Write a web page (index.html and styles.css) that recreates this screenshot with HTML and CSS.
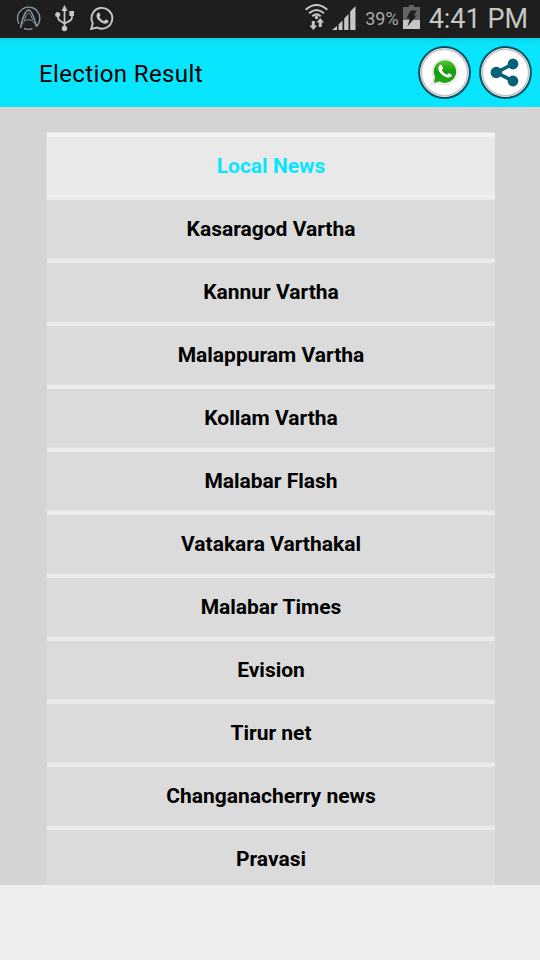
FILE: index.html
```html
<!DOCTYPE html>
<html lang="en">
<head>
    <meta charset="UTF-8">
    <meta name="viewport" content="width=device-width, initial-scale=1.0">
    <title>Election Result</title>
    <link rel="stylesheet" href="styles.css">
</head>
<body>
    <div class="status-bar">
        <div class="status-left">
            <svg class="icon-app" width="26" height="26" viewBox="0 0 26 26" fill="none" stroke="#8d9aa8">
                <path d="M3 19A11.200 11.200 0 1 1 20.500 21.300M8 23.300A11.200 11.200 0 0 0 16.500 23.700" stroke-width="1.300"/>
                <path d="M4.500 23C6 14 9.500 5 12.500 5C15.500 5 18 12 20.500 21.500" stroke-width="1.400"/>
                <path d="M4.500 23C7 13 16 11.500 20.500 21.500M8.300 15.500C10 10 11.500 8 12.500 8C13.500 8 15 10 16.700 15" stroke-width="1"/>
            </svg>
            <svg class="icon-usb" width="22" height="28" viewBox="0 0 22 28">
                <path d="M10.500 5V24M4 9V12.500C4 15 6 16 10 18.200M18 8V12.500C18 15 16 16 11 18.200" fill="none" stroke="#c6c6c6" stroke-width="1.700"/>
                <path d="M10.500 0L13.600 6H7.400ZM15.300 6H20V11H15.300Z" fill="#c6c6c6"/>
                <circle cx="3.700" cy="9.500" r="2.500" fill="#c6c6c6"/>
                <circle cx="10.500" cy="23.500" r="2.700" fill="#c6c6c6"/>
            </svg>
            <svg class="icon-chat" width="24" height="25" viewBox="0 0 24 25">
                <path d="M1.200 23L2.800 17.300A10.400 10.400 0 1 1 7.300 21.600Z" fill="none" stroke="#c6c6c6" stroke-width="1.900"/>
                <path d="M7.500 7C9 5.800 9.500 6.300 10.500 9.200C10.500 10 9.300 10.500 9.500 11.100C10.500 13.200 12 14.500 14 15.200C14.800 15.200 15.300 13.500 16 13.600C18.800 14.900 19 15 18 16.600C16.500 18.200 14.300 18 11.500 16.500C8 14.300 4.800 10.500 7.500 7Z" fill="#c6c6c6"/>
            </svg>
        </div>
        <div class="status-right">
            <svg class="icon-wifi" width="24" height="27" viewBox="0 0 24 27">
                <g fill="none" stroke="#c6c6c6" stroke-width="2">
                    <path d="M.7 5.700Q11.500 -3.700 22.300 5.700"/>
                    <path d="M4 9.200Q11.500 2.700 19 9.200"/>
                    <path d="M7.300 12.300Q11.500 8.500 15.700 12.300"/>
                </g>
                <circle cx="11.500" cy="13.500" r="1.700" fill="#c6c6c6"/>
                <path d="M6.800 17H9.800V21.500H12.200L8.300 26L4.500 21.500H6.800ZM13.800 23V18.500H11.400L15.200 14L19 18.500H16.800V23Z" fill="#c6c6c6"/>
            </svg>
            <svg class="icon-signal" width="24" height="24" viewBox="0 0 24 24">
                <path d="M0 24L5 20V24ZM6.500 18.500L10.500 14.500V24H6.500ZM12.200 12.500L16.500 8V24H12.200ZM18.200 5.500L23.500 0V24H18.200Z" fill="#c6c6c6"/>
            </svg>
            <span class="battery-level">39%</span>
            <svg class="icon-battery" width="17" height="24" viewBox="0 0 17 24">
                <path d="M0 2H6V0H11V2H17V15H0Z" fill="#646464"/>
                <path d="M0 15H17V24H0Z" fill="#c6c6c6"/>
                <path d="M7.500 5.500H14L10.800 10.500H13.500L4.500 21.500L7 13.500H3.500Z" fill="#1e1e1e"/>
            </svg>
            <span class="clock">4:41 PM</span>
        </div>
    </div>

    <div class="header">
        <h1 class="title">Election Result</h1>
        <div class="actions">
            <button class="round-button" aria-label="WhatsApp">
                <svg width="53" height="53" viewBox="0 0 53 53">
                    <defs>
                        <linearGradient id="green" x1="0" y1="0" x2="0" y2="1">
                            <stop offset="0" stop-color="#50c832"/>
                            <stop offset=".5" stop-color="#169b0c"/>
                            <stop offset="1" stop-color="#22a915"/>
                        </linearGradient>
                    </defs>
                    <circle cx="26.500" cy="26.500" r="25.400" fill="#fff" stroke="#075263" stroke-width="2"/>
                    <circle cx="26.500" cy="26.500" r="23.200" fill="none" stroke="#c4c4c4" stroke-width="1.600"/>
                    <path d="M13 39.500L15.600 32A12.800 12.800 0 1 1 20.500 37Z" fill="#fff" stroke="#dedede" stroke-width="1"/>
                    <path d="M15.800 37L17 31A11.300 11.300 0 1 1 21.500 35.500Z" fill="url(#green)"/>
                    <path d="M21.700 19C23.200 18 24.200 19 25 22C25 23 23.800 23.500 24 24.200C25.200 26.500 26.800 28 28.800 28.700C29.800 28.700 30.200 27 31 27.200C34 28.500 34.300 28.700 33.200 30.500C31.500 32 29.500 32 26.300 30.300C22 27.800 18.200 22.800 21.700 19Z" fill="#fff"/>
                </svg>
            </button>
            <button class="round-button" aria-label="Share">
                <svg width="53" height="53" viewBox="0 0 53 53">
                    <circle cx="26.500" cy="26.500" r="25.400" fill="#fff" stroke="#075263" stroke-width="2"/>
                    <circle cx="26.500" cy="26.500" r="23.200" fill="none" stroke="#c4c4c4" stroke-width="1.600"/>
                    <path d="M34 18L17.500 26.500L34 35" fill="none" stroke="#056176" stroke-width="3.600"/>
                    <g fill="#056176">
                        <circle cx="17.300" cy="26.500" r="5.700"/>
                        <circle cx="34" cy="18" r="5.400"/>
                        <circle cx="34" cy="35" r="5.400"/>
                    </g>
                </svg>
            </button>
        </div>
    </div>

    <div class="content">
        <ul class="news-list">
            <li class="item heading">Local News</li>
            <li class="item">Kasaragod Vartha</li>
            <li class="item">Kannur Vartha</li>
            <li class="item">Malappuram Vartha</li>
            <li class="item">Kollam Vartha</li>
            <li class="item">Malabar Flash</li>
            <li class="item">Vatakara Varthakal</li>
            <li class="item">Malabar Times</li>
            <li class="item">Evision</li>
            <li class="item">Tirur net</li>
            <li class="item">Changanacherry news</li>
            <li class="item">Pravasi</li>
        </ul>
    </div>
</body>
</html>
```
FILE: styles.css
```css
* {
    box-sizing: border-box;
}
body {
    font-family: Roboto, "Liberation Sans", sans-serif;
    margin: 0;
    height: 960px;
    overflow: hidden;
    background: #eee;
}
svg {
    display: block;
    flex-shrink: 0;
}
.status-bar {
    display: flex;
    justify-content: space-between;
    height: 38px;
    padding: 0 12px 0 16px;
    background: #1e1e1e;
    color: #c6c6c6;
}
.status-left,
.status-right {
    display: flex;
    align-items: flex-start;
}
.icon-app {
    margin-top: 5px;
}
.icon-usb {
    margin: 5px 0 0 12px;
}
.icon-chat {
    margin: 6px 0 0 14px;
}
.icon-wifi {
    margin-top: 4px;
}
.icon-signal {
    margin: 6px 0 0 3px;
}
.battery-level {
    margin: 8px 0 0 9px;
    font-size: 18px;
    line-height: 22px;
    color: #a8a8a8;
}
.icon-battery {
    margin: 5px 0 0 4px;
}
.clock {
    margin-left: 9px;
    font-size: 27px;
    line-height: 38px;
    white-space: nowrap;
}
.header {
    display: flex;
    justify-content: space-between;
    height: 69px;
    padding: 8px 8px 0 39px;
    background: linear-gradient(#08cfe3, #0adff5 3px, #0ae5ff 9px);
}
.title {
    margin: 0;
    font-size: 24px;
    font-weight: 400;
    line-height: 57px;
    letter-spacing: 0.38px;
    color: #000;
}
.actions {
    display: flex;
    gap: 8px;
}
.round-button {
    width: 53px;
    height: 53px;
    padding: 0;
    border: none;
    background: none;
}
.content {
    height: 778px;
    padding: 25px 45px 0 46px;
    overflow: hidden;
    background: #d4d4d4;
}
.news-list {
    margin: 0;
    padding: 0;
    list-style: none;
}
.item {
    height: 63px;
    padding: 5px 0 0 1px;
    background: linear-gradient(#e2e2e2 1px, #ebebeb 1px, #ebebeb 5px, #dbdbdb 5px);
    font-size: 21px;
    font-weight: 700;
    line-height: 59px;
    text-align: center;
    color: #000;
    box-shadow: inset 1px 0 #d8d8d8;
}
.heading {
    background: linear-gradient(#e2e2e2 1px, #f3f3f3 1px, #f3f3f3 5px, #e9e9e9 5px);
    color: #0ae5ff;
    box-shadow: inset 1px 0 #dedede;
}
.heading + .item {
    background: linear-gradient(#ededed 1px, #f3f3f3 1px, #f3f3f3 2px, #ebebeb 2px, #ebebeb 5px, #dbdbdb 5px);
}
```
